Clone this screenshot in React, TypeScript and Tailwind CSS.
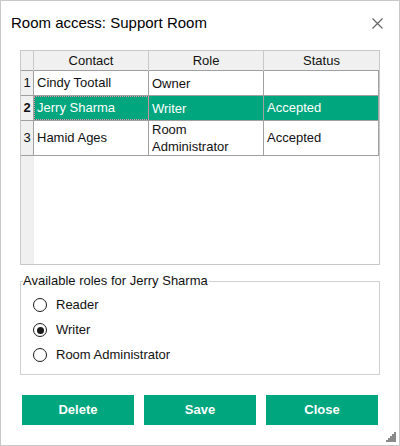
import React from "react";

const rows = [
  { n: "1", contact: "Cindy Tootall", role: "Owner", status: "" },
  { n: "2", contact: "Jerry Sharma", role: "Writer", status: "Accepted", selected: true },
  { n: "3", contact: "Hamid Ages", role: "Room Administrator", status: "Accepted", tall: true },
];

const roles = ["Reader", "Writer", "Room Administrator"];

function Radio({ checked }: { checked?: boolean }) {
  return (
    <span className="w-[14px] h-[14px] rounded-full border-[1.5px] border-[#1a1a1a] bg-white flex items-center justify-center">
      {checked && <span className="w-[7px] h-[7px] rounded-full bg-[#1a1a1a]" />}
    </span>
  );
}

function Grip() {
  const dots = [
    [8, 0],
    [6, 2], [8, 2],
    [4, 4], [6, 4], [8, 4],
    [2, 6], [4, 6], [6, 6], [8, 6],
    [0, 8], [2, 8], [4, 8], [6, 8], [8, 8],
  ];
  return (
    <svg width="10" height="10" viewBox="0 0 10 10" className="absolute right-[3px] bottom-[3px]">
      {dots.map(([x, y], i) => (
        <rect key={i} x={x} y={y} width="2" height="2" fill="#8a8a8a" />
      ))}
    </svg>
  );
}

export default function App() {
  return (
    <div
      className="relative w-[400px] h-[446px] bg-white border border-[#c8c8c8] flex flex-col text-[#111]"
      style={{ fontFamily: '"Liberation Sans", Arial, sans-serif' }}
    >
      {/* title bar */}
      <div className="h-[49px] flex items-start justify-between pl-[10px] pr-[16px] pt-[12px]">
        <span className="text-[15px] leading-[20px] text-black">Room access: Support Room</span>
        <svg width="11" height="11" viewBox="0 0 11 11" className="mt-[5px]">
          <path d="M0.5 0.5 L10.5 10.5 M10.5 0.5 L0.5 10.5" stroke="#666" strokeWidth="1.2" />
        </svg>
      </div>

      {/* grid */}
      <div className="ml-[19px] w-[360px] h-[215px] border border-[#c8c8c8] flex flex-col text-[13px]">
        <div className="grid grid-cols-[13px_115px_115px_1fr] h-[20px] bg-[#f0f0f0] border-b border-[#a0a0a0]">
          <div className="border-r border-[#c8c8c8]" />
          <div className="border-r border-[#c8c8c8] flex items-center justify-center">Contact</div>
          <div className="border-r border-[#c8c8c8] flex items-center justify-center">Role</div>
          <div className="flex items-center justify-center">Status</div>
        </div>
        {rows.map((r) => (
          <div
            key={r.n}
            className={`grid grid-cols-[13px_115px_115px_1fr] border-b border-[#a0a0a0] ${r.tall ? "h-[35px]" : "h-[25px]"}`}
          >
            <div className={`bg-[#f0f0f0] border-r border-[#a0a0a0] flex items-center justify-center ${r.selected ? "font-bold" : ""}`}>
              {r.n}
            </div>
            <div
              className={`border-r border-[#a0a0a0] flex items-center pl-[3px] ${r.selected ? "bg-[#00a67e] text-white outline-1 outline-dotted outline-[#e88aa8] -outline-offset-1" : "bg-white"}`}
            >
              {r.contact}
            </div>
            <div
              className={`border-r border-[#a0a0a0] flex items-center pl-[3px] leading-[17px] ${r.selected ? "bg-[#00a67e] text-white" : "bg-white"}`}
            >
              {r.role === "Room Administrator" ? (
                <span>
                  Room
                  <br />
                  Administrator
                </span>
              ) : (
                r.role
              )}
            </div>
            <div className={`flex items-center pl-[3px] border-r border-[#a0a0a0] ${r.selected ? "bg-[#00a67e] text-white" : "bg-white"}`}>
              {r.status}
            </div>
          </div>
        ))}
        <div className="flex-1 flex">
          <div className="w-[13px] bg-[#f0f0f0]" />
          <div className="flex-1 bg-white" />
        </div>
      </div>

      {/* role group */}
      <div className="relative ml-[19px] mt-[16px] w-[360px] h-[94px] border border-[#d0d0d0]">
        <span className="absolute left-[2px] -top-[9px] bg-white pr-[1px] text-[13px] leading-[16px]">
          Available roles for Jerry Sharma
        </span>
        <div className="flex flex-col pt-[16px] pl-[12px] gap-[11px]">
          {roles.map((role) => (
            <div key={role} className="flex items-center gap-[9px] h-[14px] text-[13px]">
              <Radio checked={role === "Writer"} />
              <span>{role}</span>
            </div>
          ))}
        </div>
      </div>

      {/* buttons */}
      <div className="flex gap-[10px] ml-[21px] mt-[20px]">
        {["Delete", "Save", "Close"].map((b) => (
          <button
            key={b}
            className="w-[112px] h-[30px] bg-[#00a67e] text-white font-bold text-[13px] flex items-center justify-center"
          >
            {b}
          </button>
        ))}
      </div>

      <Grip />
    </div>
  );
}
